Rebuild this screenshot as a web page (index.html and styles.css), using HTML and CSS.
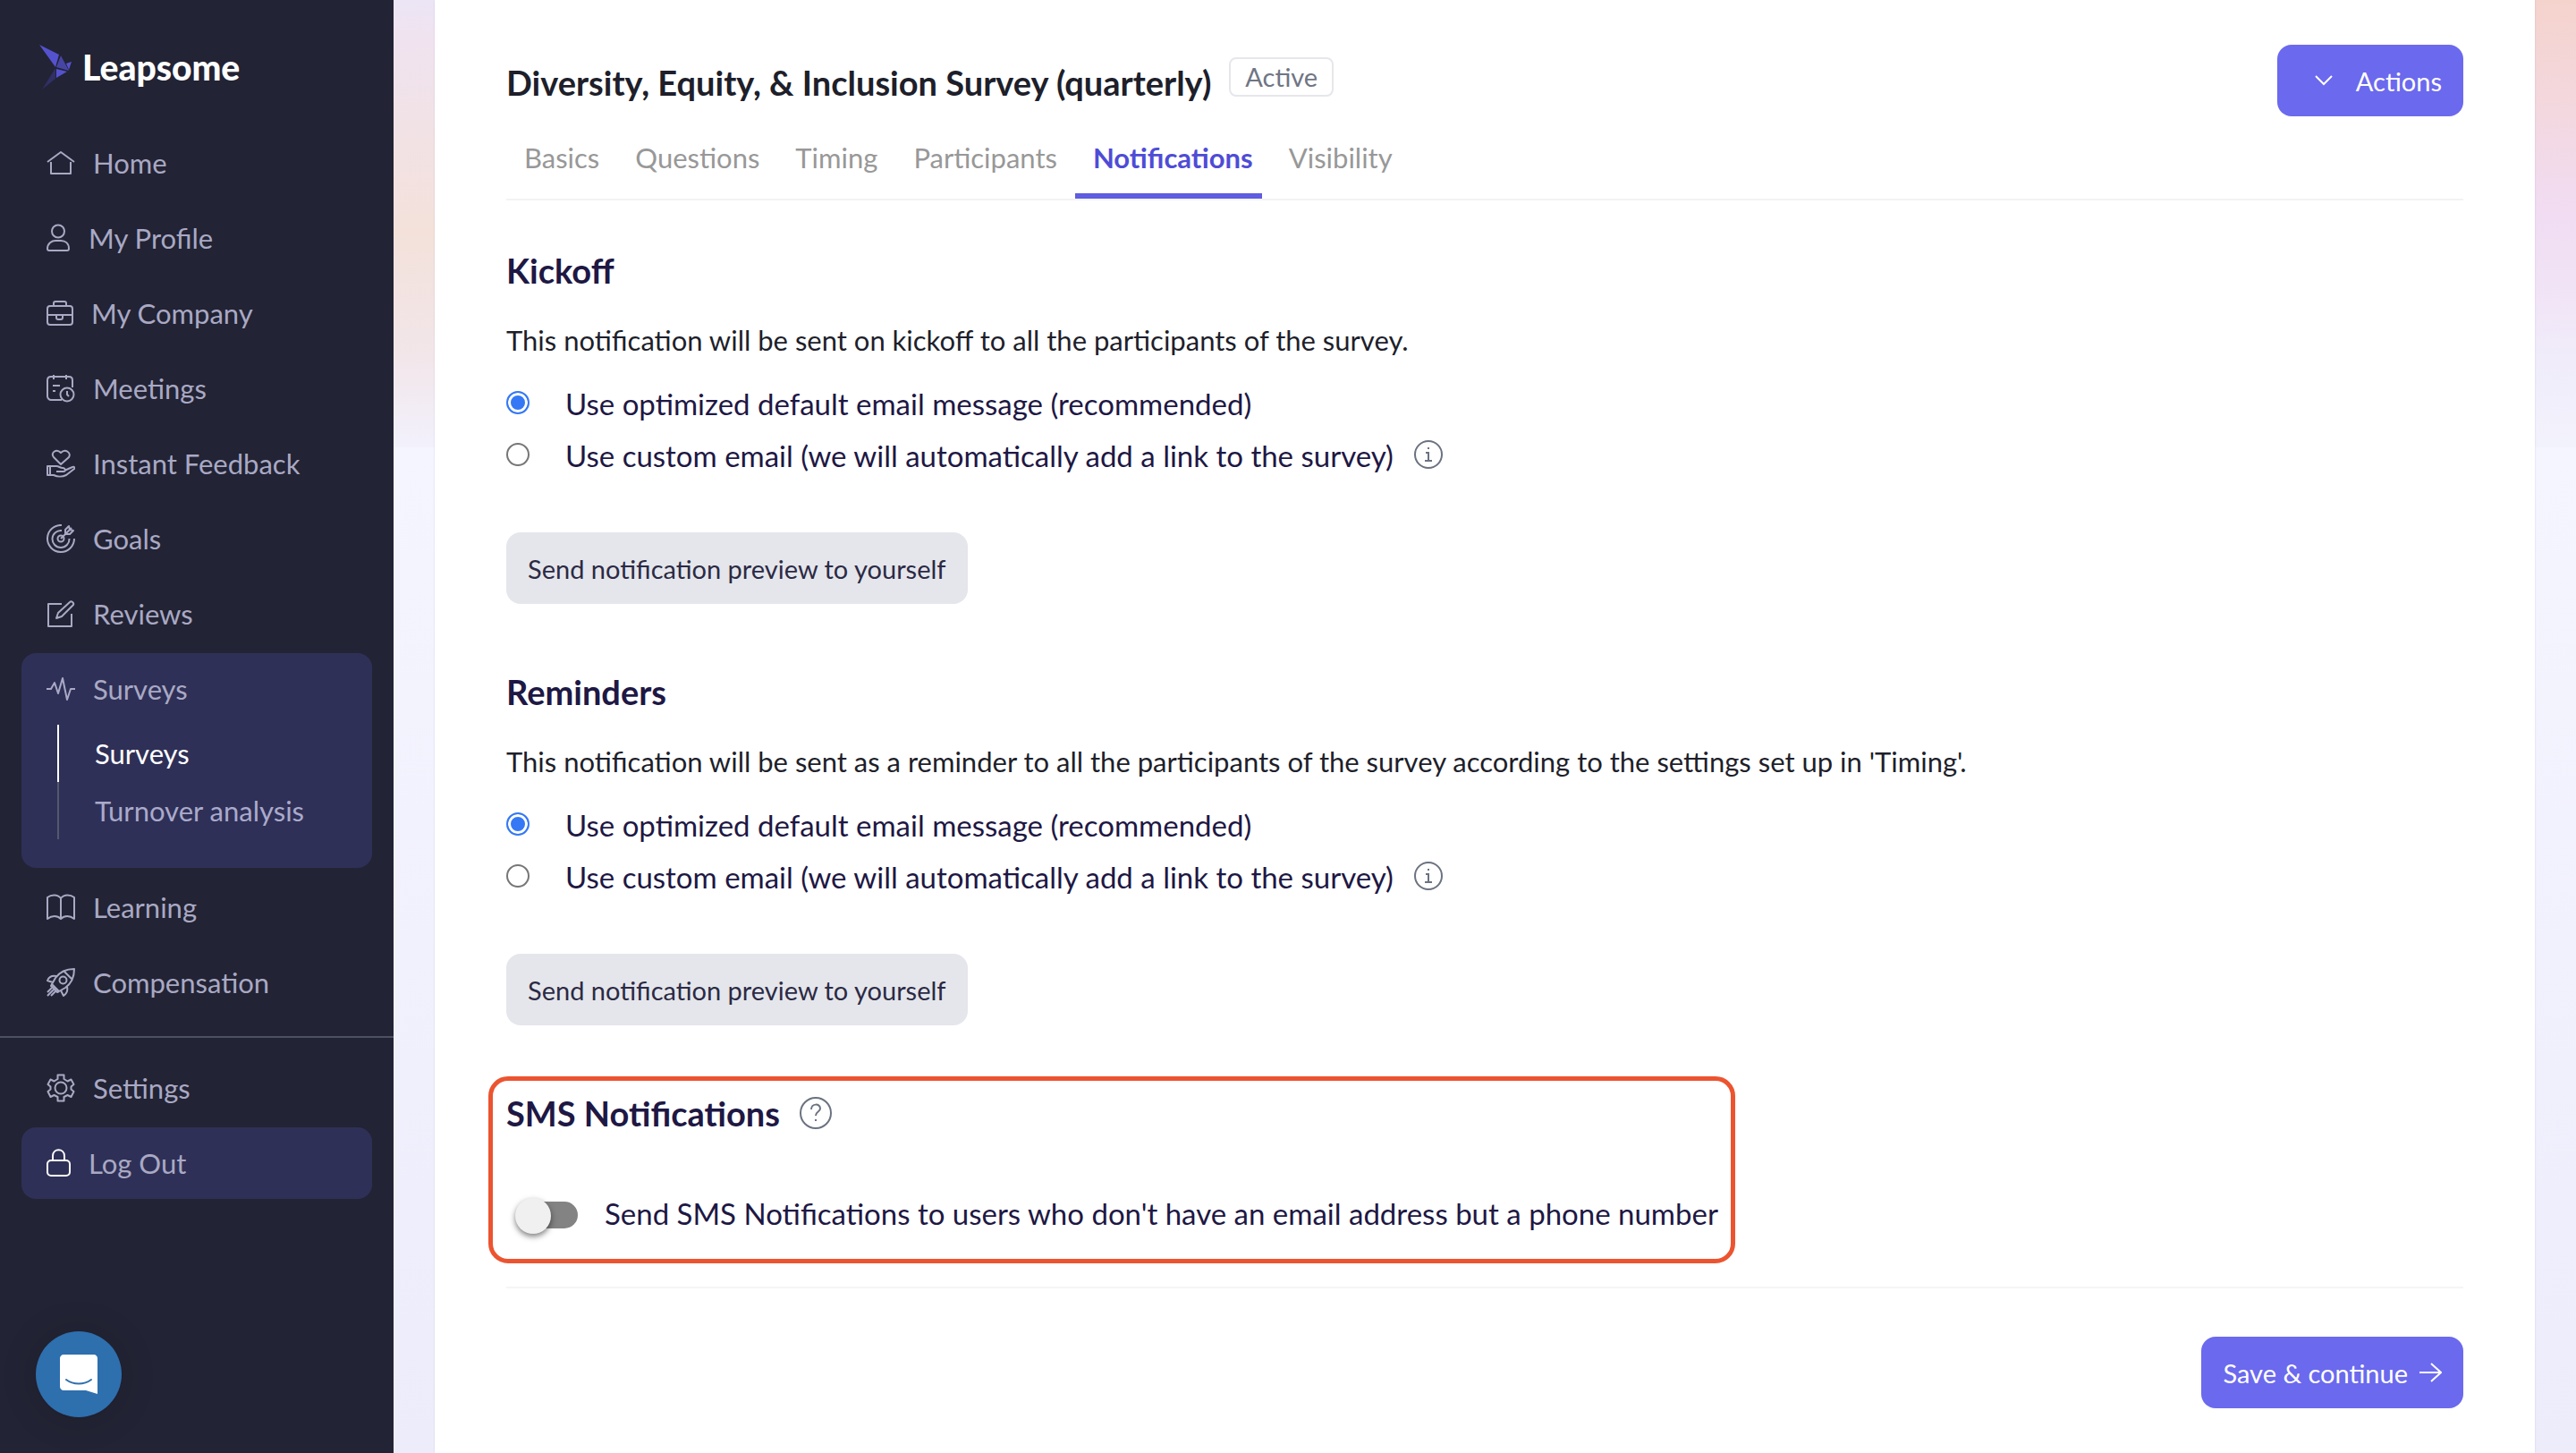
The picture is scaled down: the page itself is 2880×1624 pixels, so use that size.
FILE: index.html
```html
<!DOCTYPE html>
<html lang="en">
<head>
  <meta charset="UTF-8">
  <title>Leapsome</title>
  <link rel="stylesheet" href="styles.css">
</head>
<body>
  <div class="container">
    <div class="sidebar">
      <a class="logo" href="#">
        <svg width="36" height="50" viewBox="0 0 36 50">
          <path fill="#5552cf" d="M0 0l22 11-4 14z"/>
          <path fill="#4745a3" d="M24 12l9 17-14-4z"/>
          <path fill="#5552cf" d="M36 19l-6 2 3 7zM19 27l12 3-12 7z"/>
          <path fill="#302f66" d="M18 26v12L3 50z"/>
        </svg>
        <span>Leapsome</span>
      </a>
      <nav class="menu">
        <a class="item" href="#">
          <svg class="icon" width="32" height="32" viewBox="0 0 32 32"><path d="M1 15L16 4l15 11M5 15v13h22V15"/></svg>
          Home
        </a>
        <a class="item" href="#">
          <svg class="icon" width="27" height="32" viewBox="0 0 27 32"><circle cx="13" cy="8.500" r="7"/><path d="M1 28c0-6 5-9 9-9h6c5 0 9 3 9 9 0 1-1 2-2 2H3c-1 0-2-1-2-2z"/></svg>
          My Profile
        </a>
        <a class="item" href="#">
          <svg class="icon" width="30" height="32" viewBox="0 0 30 32"><rect x="1" y="8" width="28" height="21" rx="3"/><path d="M8 8V5c0-1 1-2 2-2h10c1 0 2 1 2 2v3M1 18h28M11 18v3c0 1 1 2 2 2h3c1 0 2-1 2-2v-3"/></svg>
          My Company
        </a>
        <a class="item" href="#">
          <svg class="icon" width="32" height="32" viewBox="0 0 32 32"><path d="M29 15V7c0-3-2-4-4-4H5C3 3 1 4 1 7v18c0 2 2 4 4 4h12M8 1v5M22 1v5M7 13h8M7 19h3"/><circle cx="23" cy="23" r="7.500"/><path d="M23 19v4l2 2"/></svg>
          Meetings
        </a>
        <a class="item" href="#">
          <svg class="icon" width="32" height="32" viewBox="0 0 32 32"><path d="M16 17L8 9C4 4 11-1 16 4c5-5 12 0 9 5zM1 19h3v10H1zM4 19h7c3 0 4 2 7 2 3 0 4 4 1 4h-8M20 24l9-4c2-1 3 1 2 2l-9 7c-4 2-10 2-14 0H4"/></svg>
          Instant Feedback
        </a>
        <a class="item" href="#">
          <svg class="icon" width="32" height="32" viewBox="0 0 32 32"><path d="M17 1a15 15 0 1 0 14 15M17 7a9.500 9.500 0 1 0 8.500 9"/><circle cx="16" cy="16" r="3.500"/><path d="M16 16l8-8M21 11V6l4-4 1 4 4 1-4 4zM23 9l5-5"/></svg>
          Goals
        </a>
        <a class="item" href="#">
          <svg class="icon" width="32" height="32" viewBox="0 0 32 32"><path d="M17 5H2v25h26V16M11 21l2-6L26 3c2-2 5 1 4 3L17 19z"/></svg>
          Reviews
        </a>
        <div class="group">
          <a class="item" href="#">
            <svg class="icon" width="32" height="32" viewBox="0 0 32 32"><path d="M0 16h5l4-7 4 12 5-17 5 24 4-12h5"/></svg>
            Surveys
          </a>
          <a class="subitem current" href="#">Surveys</a>
          <a class="subitem" href="#">Turnover analysis</a>
        </div>
        <a class="item" href="#">
          <svg class="icon" width="32" height="32" viewBox="0 0 32 32"><path d="M16 6C12 1 5 2 1 5v24c5-4 11-4 15 0 4-4 10-4 15 0V5c-4-3-11-4-15 1zM16 6v23"/></svg>
          Learning
        </a>
        <a class="item" href="#">
          <svg class="icon" width="32" height="32" viewBox="0 0 32 32"><path d="M31 1C22 1 15 4 10 11l-4 7 8 8 7-4c7-5 10-12 10-21zM20 4l8 8M11 9C6 8 3 9 1 14l6 2M23 21c1 4 0 7-4 10l-3-6M6 18l-1 2 7 7 2-1M6 22l-5 5M8 24l-7 7M10 26l-5 5"/><circle cx="18.500" cy="13.500" r="4"/></svg>
          Compensation
        </a>
      </nav>
      <nav class="menu menu-bottom">
        <a class="item" href="#">
          <svg class="icon" width="32" height="32" viewBox="0 0 32 32"><circle cx="16" cy="16" r="6.500"/><path d="M12.500 1.500h7v4.500l4 2.500 4-2 3 5.500-3 2.500v3l3 2.500-3 6-4-2-4 2v4.500h-7V26l-4-2-4 2-3-6 3-2.500v-3L1.500 12l3-5.500 4 2 4-2.500z"/></svg>
          Settings
        </a>
        <a class="item logout" href="#">
          <svg class="icon" width="27" height="32" viewBox="0 0 27 32"><rect x="1" y="13" width="25" height="17" rx="4"/><path d="M7 13V8c0-9 13-9 13 0v5"/></svg>
          Log Out
        </a>
      </nav>
    </div>

    <div class="main">
      <div class="card">
        <div class="header">
          <h1>Diversity, Equity, &amp; Inclusion Survey (quarterly)</h1>
          <span class="badge">Active</span>
          <button class="btn btn-primary actions" type="button">
            <svg width="20" height="12" viewBox="0 0 20 12"><path d="M1 1l9 9 9-9"/></svg>
            Actions
          </button>
        </div>
        <div class="tabs">
          <a href="#">Basics</a>
          <a href="#">Questions</a>
          <a href="#">Timing</a>
          <a href="#">Participants</a>
          <a class="active" href="#">Notifications</a>
          <a href="#">Visibility</a>
        </div>

        <div class="section">
          <h2>Kickoff</h2>
          <p>This notification will be sent on kickoff to all the participants of the survey.</p>
          <div class="option">
            <input type="radio" name="kickoff" id="kickoffDefault" checked>
            <label for="kickoffDefault">Use optimized default email message (recommended)</label>
          </div>
          <div class="option">
            <input type="radio" name="kickoff" id="kickoffCustom">
            <label for="kickoffCustom">Use custom email (we will automatically add a link to the survey)</label>
            <svg class="hint" width="34" height="34" viewBox="0 0 34 34"><circle cx="17" cy="17" r="15"/><path d="M14 15h3v9M13 24h8M16 10h2"/></svg>
          </div>
          <button class="btn btn-grey" type="button">Send notification preview to yourself</button>
        </div>

        <div class="section">
          <h2>Reminders</h2>
          <p>This notification will be sent as a reminder to all the participants of the survey according to the settings set up in 'Timing'.</p>
          <div class="option">
            <input type="radio" name="reminders" id="remindersDefault" checked>
            <label for="remindersDefault">Use optimized default email message (recommended)</label>
          </div>
          <div class="option">
            <input type="radio" name="reminders" id="remindersCustom">
            <label for="remindersCustom">Use custom email (we will automatically add a link to the survey)</label>
            <svg class="hint" width="34" height="34" viewBox="0 0 34 34"><circle cx="17" cy="17" r="15"/><path d="M14 15h3v9M13 24h8M16 10h2"/></svg>
          </div>
          <button class="btn btn-grey" type="button">Send notification preview to yourself</button>
        </div>

        <div class="sms">
          <div class="sms-title">
            <h2>SMS Notifications</h2>
            <svg class="hint" width="36" height="36" viewBox="0 0 36 36"><circle cx="18" cy="18" r="17"/><path d="M13 14c0-7 10-7 10-1 0 4-5 3-5 8M18 25v2"/></svg>
          </div>
          <div class="sms-row">
            <input type="checkbox" class="toggle" id="smsToggle">
            <label for="smsToggle">Send SMS Notifications to users who don't have an email address but a phone number</label>
          </div>
        </div>

        <div class="footer">
          <button class="btn btn-primary" type="button">
            Save &amp; continue
            <svg width="26" height="22" viewBox="0 0 26 22"><path d="M1 11h24M14 1l11 10-11 10"/></svg>
          </button>
        </div>
      </div>
    </div>
  </div>

  <button class="chat" type="button" aria-label="Open chat">
    <svg width="42" height="44" viewBox="0 0 42 44">
      <path fill="#fff" d="M4 0h34c2 0 4 2 4 4v40l-13-4H4c-2 0-4-2-4-4V4c0-2 2-4 4-4z"/>
      <path fill="none" stroke="#2e6fae" stroke-width="2" stroke-linecap="round" d="M7 28c8 6 20 6 28 0"/>
    </svg>
  </button>
</body>
</html>
```
FILE: styles.css
```css
* {
  box-sizing: border-box;
}
body {
  margin: 0;
  font-family: Lato, "Liberation Sans", sans-serif;
  font-size: 31px;
  color: #1e1f2b;
}
a {
  color: inherit;
  text-decoration: none;
}
svg {
  flex: none;
}
.container {
  display: flex;
  min-height: 100vh;
}

/* sidebar */
.sidebar {
  width: 440px;
  flex: none;
  background-color: #222334;
}
.logo {
  display: flex;
  align-items: center;
  gap: 12px;
  height: 142px;
  padding: 8px 44px 0;
  color: white;
  font-size: 39px;
  font-weight: 900;
}
.menu {
  display: flex;
  flex-direction: column;
  gap: 4px;
  padding: 0 24px 20px;
}
.menu-bottom {
  border-top: 2px solid #4b5163;
  padding-top: 16px;
}
.item {
  display: flex;
  align-items: center;
  gap: 20px;
  height: 80px;
  padding: 0 28px;
  border-radius: 16px;
  color: #a9a9c4;
}
.icon {
  fill: none;
  stroke: currentColor;
  stroke-width: 2;
  stroke-linejoin: round;
}
.group {
  background-color: #2f3057;
  border-radius: 16px;
  padding-bottom: 32px;
}
.subitem {
  display: flex;
  align-items: center;
  height: 64px;
  margin-left: 40px;
  padding-left: 40px;
  border-left: 2px solid #55586b;
  color: #aaaacb;
}
.subitem.current {
  color: white;
  border-color: white;
}
.logout {
  background-color: #2f3057;
}
.logout .icon {
  stroke: white;
}

/* content */
.main {
  flex: 1;
  padding: 0 46px;
  background:
    linear-gradient(#ebe5f5, #f0e3f0 40px, #f3e1da 260px, #f2e6ea 400px, #f2f1fc 500px) left top / 50% 500px no-repeat,
    linear-gradient(#f5d3cd, #f3d8e0 130px, #f1dcf3 240px, #f1e4f6 330px, #f0ecfa 400px, #f2f2fc 500px) right top / 50% 500px no-repeat,
    linear-gradient(#f5f5ff 500px, #edecfb);
}
.card {
  min-height: 100vh;
  padding: 50px 80px;
  background-color: white;
  box-shadow: 0 0 2px rgba(60, 50, 120, 0.15);
}
.header {
  display: flex;
  align-items: flex-start;
  gap: 20px;
  height: 100px;
}
h1 {
  margin: 18px 0 0;
  font-size: 38px;
  line-height: 48px;
}
h2 {
  margin: 0;
  font-size: 38px;
  line-height: 48px;
  color: #1e1844;
}
.badge {
  margin-top: 14px;
  padding: 0 16px;
  border: 2px solid #e5e7eb;
  border-radius: 8px;
  font-size: 29px;
  line-height: 40px;
  color: #6f7584;
}
.btn {
  display: flex;
  align-items: center;
  gap: 12px;
  height: 80px;
  padding: 0 24px;
  border: none;
  border-radius: 16px;
  font-family: inherit;
  font-size: 29px;
  cursor: pointer;
}
.btn svg {
  fill: none;
  stroke: currentColor;
  stroke-width: 2;
}
.btn-primary {
  background-color: #6b69ee;
  color: white;
}
.btn-grey {
  margin-top: 58px;
  background-color: #e5e6eb;
  color: #2b2a45;
}
.actions {
  gap: 26px;
  margin-left: auto;
  padding-left: 42px;
}
.tabs {
  display: flex;
  border-bottom: 2px solid #f3f3f5;
  color: #989898;
}
.tabs a {
  height: 72px;
  padding: 8px 20px 0;
  line-height: 36px;
}
.tabs .active {
  margin-right: 10px;
  padding-right: 10px;
  border-bottom: 6px solid #5f5de0;
  color: #4f4cd6;
  font-weight: bold;
}
.section {
  height: 471px;
  padding-top: 54px;
}
.section p {
  margin: 34px 0 21px;
  line-height: 40px;
}
.option {
  display: flex;
  align-items: center;
  height: 58px;
  color: #1e1844;
  font-size: 33px;
}
.option input {
  appearance: none;
  width: 26px;
  height: 26px;
  margin: 0 40px 0 0;
  border: 2px solid #767676;
  border-radius: 50%;
}
.option input:checked {
  border-color: #3478f6;
  background-color: #3478f6;
  box-shadow: inset 0 0 0 3px white;
}
.option label {
  padding-top: 2px;
}
.hint {
  margin-left: 22px;
  fill: none;
  stroke: #6b7280;
  stroke-width: 2;
}
.sms {
  width: fit-content;
  margin: 37px 0 0 -20px;
  padding: 12px 14px 31px 15px;
  border: 5px solid #ec5430;
  border-radius: 22px;
  color: #1e1844;
}
.sms-title {
  display: flex;
  align-items: center;
}
.sms-row {
  display: flex;
  align-items: center;
  margin-top: 68px;
  font-size: 33px;
}
.toggle {
  appearance: none;
  position: relative;
  width: 64px;
  height: 30px;
  margin: 4px 30px 0 16px;
  border-radius: 15px;
  background-color: #838383;
}
.toggle::before {
  content: "";
  position: absolute;
  left: -6px;
  top: -4px;
  width: 40px;
  height: 40px;
  border-radius: 50%;
  background-color: #f0f0f0;
  box-shadow: 0 3px 6px rgba(0, 0, 0, 0.5);
}
.footer {
  display: flex;
  justify-content: flex-end;
  margin-top: 26px;
  padding-top: 54px;
  border-top: 2px solid #f5f5f6;
}

/* chat launcher */
.chat {
  position: fixed;
  left: 40px;
  bottom: 40px;
  width: 96px;
  height: 96px;
  padding: 0;
  border: none;
  border-radius: 50%;
  background-color: #2e6fae;
  box-shadow: 0 2px 40px rgba(0, 0, 0, 0.15);
  cursor: pointer;
}
.chat svg {
  display: block;
  margin: auto;
}
```
